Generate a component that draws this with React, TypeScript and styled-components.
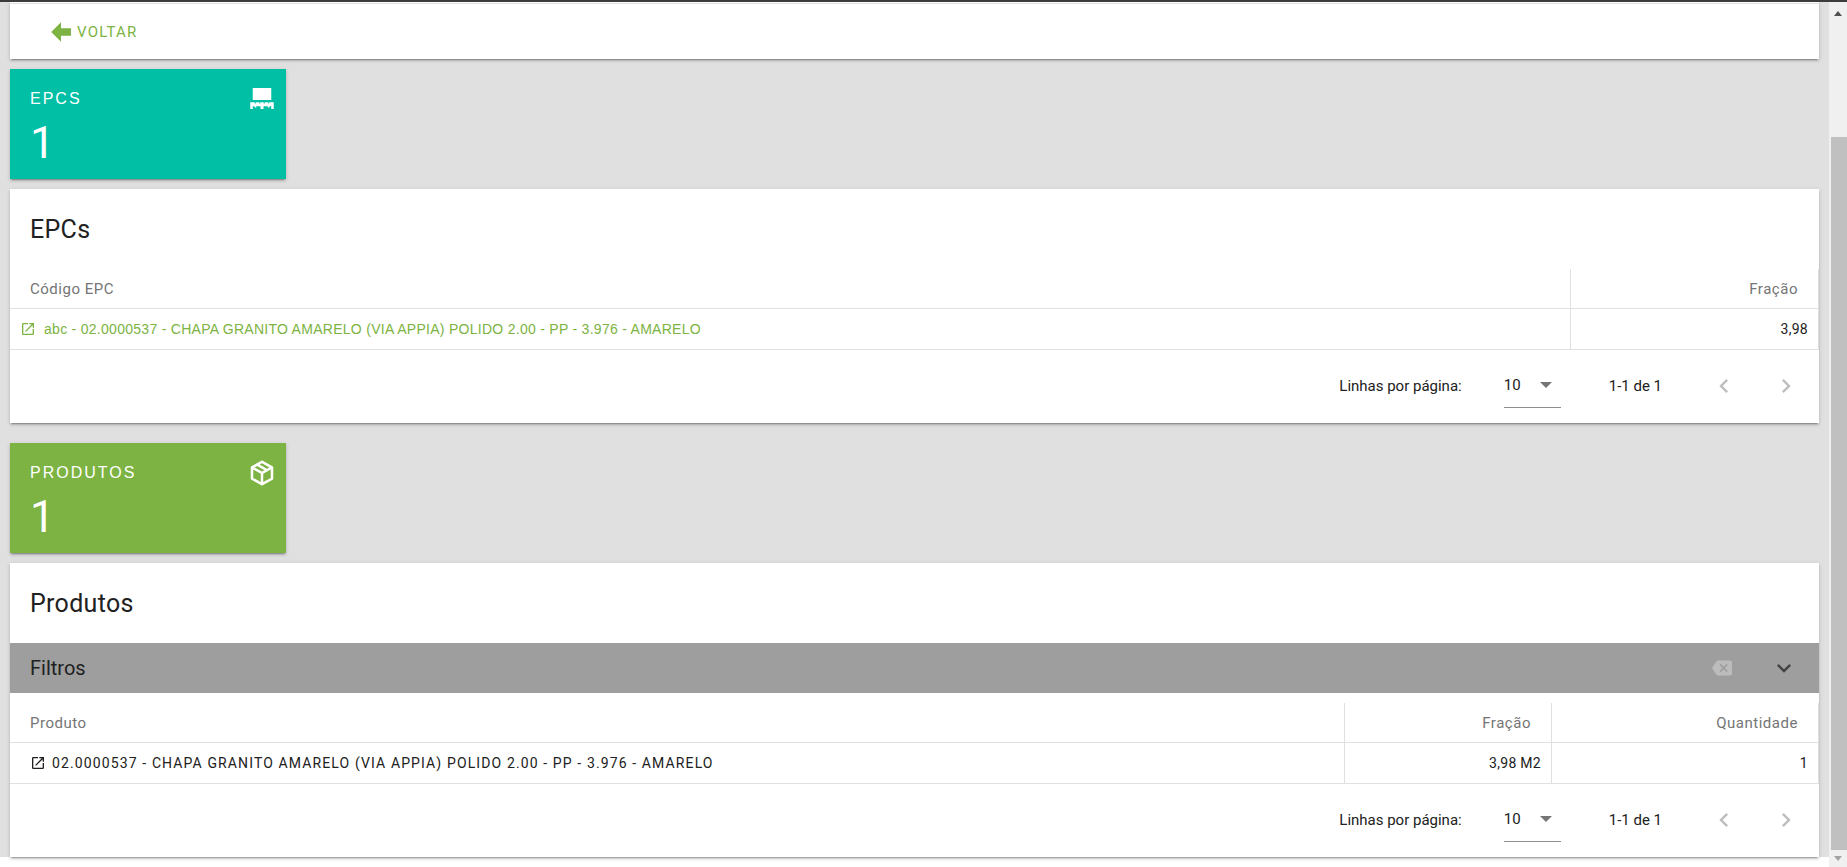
import React from "react";
import styled, { createGlobalStyle } from "styled-components";

const GlobalStyle = createGlobalStyle`
  * { box-sizing: border-box; }
  html, body { margin: 0; background: #fff; overflow: hidden; }
  body { font-family: Roboto, "Liberation Sans", sans-serif; font-size: 14px; color: #212121; }
  button, select { font: inherit; color: inherit; border: 0; background: none; padding: 0; margin: 0; }
`;

const Window = styled.div`
  display: flex;
  height: 100vh;
  overflow: hidden;
  border-top: 2px solid #3c3c3c;
`;

const Viewport = styled.div`
  flex: 1;
  min-width: 0;
  overflow: hidden;
`;

const Page = styled.main`
  background: #e0e0e0;
  padding: 0 10px;
`;

const shadow = "0 3px 1px -2px rgba(0,0,0,.2), 0 2px 2px 0 rgba(0,0,0,.14), 0 1px 5px 0 rgba(0,0,0,.12)";

const Card = styled.section`
  background: #fff;
  box-shadow: ${shadow};
`;

const ToolbarCard = styled(Card)`
  padding-top: 1px;
`;

const ToolbarInner = styled.div`
  display: flex;
  align-items: center;
  height: 56px;
  padding-left: 36px;
  border-top: 1px solid #e0e0e0;
`;

const BackButton = styled.button`
  display: flex;
  align-items: center;
  gap: 1px;
  color: #7cb342;
  font-size: 15px;
  line-height: 20px;
  letter-spacing: 0.08em;
  cursor: pointer;
`;

const Stat = styled.section<{ $color: string; $top: number }>`
  display: flex;
  justify-content: space-between;
  width: 276px;
  max-width: 100%;
  height: 110px;
  margin: ${(p) => p.$top}px 0 10px;
  padding: 15px 9px 0 20px;
  background: ${(p) => p.$color};
  box-shadow: ${shadow};
  color: #fff;
`;

const StatLabel = styled.h2`
  margin: 0;
  font-family: "Liberation Sans", Arial, sans-serif;
  font-size: 16px;
  font-weight: 400;
  line-height: 30px;
  letter-spacing: 2px;
`;

const StatValue = styled.p`
  margin: 5px 0 0;
  font-size: 44px;
  line-height: 48px;
`;

const Title = styled.h1`
  margin: 0;
  padding: 2px 20px 0;
  font-size: 25px;
  font-weight: 400;
  line-height: 78px;
  letter-spacing: 0.0125em;
`;

const Filter = styled.div`
  display: flex;
  align-items: center;
  height: 50px;
  margin-bottom: 10px;
  padding: 0 21px 0 20px;
  background: #9e9e9e;
`;

const FilterTitle = styled.h2`
  flex: 1;
  margin: 0;
  font-size: 20px;
  font-weight: 400;
`;

const IconButton = styled.button<{ $gap?: number; $color?: string }>`
  display: flex;
  margin-left: ${(p) => p.$gap ?? 0}px;
  color: ${(p) => p.$color ?? "#bdbdbd"};
  cursor: pointer;
`;

const Table = styled.table`
  width: 100%;
  table-layout: fixed;
  border-collapse: separate;
  border-spacing: 0;
`;

const Th = styled.th<{ $w?: number; $right?: boolean }>`
  width: ${(p) => (p.$w ? `${p.$w}px` : "auto")};
  height: 40px;
  padding: 0 20px;
  border: solid #e0e0e0;
  border-width: 0 1px 1px 0;
  color: #757575;
  font-size: 15px;
  font-weight: 400;
  letter-spacing: 0.035em;
  text-align: ${(p) => (p.$right ? "right" : "left")};
`;

const Td = styled.td<{ $right?: boolean }>`
  height: 41px;
  padding: 0 10px;
  border: solid #e0e0e0;
  border-width: 0 1px 1px 0;
  letter-spacing: 0.02em;
  text-align: ${(p) => (p.$right ? "right" : "left")};
`;

const EpcLink = styled.a`
  display: flex;
  align-items: center;
  gap: 8px;
  color: #7cb342;
  font-family: "Liberation Sans", Arial, sans-serif;
  text-decoration: none;
`;

const ProductLink = styled(EpcLink)`
  gap: 6px;
  padding-left: 10px;
  color: #212121;
  font-family: Roboto, sans-serif;
  letter-spacing: 0.08em;
`;

const Footer = styled.div`
  display: flex;
  align-items: center;
  justify-content: flex-end;
  height: 73px;
  padding: 0 19px 2px 0;
  font-size: 15px;
`;

const RowsLabel = styled.label`
  display: flex;
  align-items: center;
`;

const SelectBox = styled.span`
  display: flex;
  align-items: center;
  width: 57px;
  height: 45px;
  margin: 0 48px 0 42px;
  border-bottom: 1px solid #8e8e8e;
  & > select { appearance: none; width: 35px; outline: 0; }
`;

const Range = styled.span`
  margin-right: 48px;
`;

const Scrollbar = styled.div`
  display: flex;
  flex-direction: column;
  align-items: center;
  width: 18px;
  background: #f0f0f0;
`;

const ScrollArrow = styled.div<{ $height: number }>`
  display: flex;
  align-items: center;
  justify-content: center;
  height: ${(p) => p.$height}px;
`;

const Track = styled.div`
  flex: 1;
  align-self: stretch;
  display: flex;
  padding: 112px 0 0 2px;
`;

const Thumb = styled.div`
  flex: 1;
  background: #c0c0c0;
`;

function Icon({ d, size = 28 }: { d: string; size?: number }) {
  return (
    <svg width={size} height={size} viewBox="0 0 24 24" fill="currentColor" aria-hidden="true">
      <path d={d} fillRule="evenodd" />
    </svg>
  );
}

const icons = {
  back: "M20 9V15H12V19.84L4.16 12L12 4.16V9H20Z",
  pallet: "M4.600 3.200H19.400V12.800H4.600ZM2.600 14.600H21.400V20H19.400V17.800H18V18.800H16.600V17.800H13.200V20H10.800V17.800H7.400V18.800H6V17.800H4.600V20H2.600ZM6.200 14.600V15.600H7V14.600ZM9.800 14.600V15.600H10.600V14.600ZM13.400 14.600V15.600H14.200V14.600ZM17 14.600V15.600H17.800V14.600Z",
  box: "M21,16.5C21,16.88 20.79,17.21 20.47,17.38L12.57,21.82C12.41,21.94 12.21,22 12,22C11.79,22 11.59,21.94 11.43,21.82L3.53,17.38C3.21,17.21 3,16.88 3,16.5V7.5C3,7.12 3.21,6.79 3.53,6.62L11.43,2.18C11.59,2.06 11.79,2 12,2C12.21,2 12.41,2.06 12.57,2.18L20.47,6.62C20.79,6.79 21,7.12 21,7.5V16.5M12,4.15L10.11,5.22L16,8.61L17.96,7.5L12,4.15M6.04,7.5L12,10.85L13.96,9.75L8.08,6.35L6.04,7.5M5,15.91L11,19.29V12.58L5,9.21V15.91M19,15.91V9.21L13,12.58V19.29L19,15.91Z",
  open: "M14,3V5H17.59L7.76,14.83L9.17,16.24L19,6.41V10H21V3M19,19H5V5H12V3H5C3.89,3 3,3.9 3,5V19A2,2 0 0,0 5,21H19A2,2 0 0,0 21,19V12H19V19Z",
  left: "M15.41 7.41L14 6L8 12L14 18L15.41 16.59L10.83 12Z",
  right: "M8.59 16.59L13.17 12L8.59 7.41L10 6L16 12L10 18Z",
  down: "M7.41 8.59L12 13.17L16.59 8.59L18 10L12 16L6 10Z",
  clear: "M22 3H7C6.31 3 5.77 3.35 5.41 3.88L0 12L5.41 20.11C5.77 20.64 6.31 21 7 21H22C23.1 21 24 20.1 24 19V5C24 3.9 23.1 3 22 3M19 15.59L17.59 17L14 13.41L10.41 17L9 15.59L12.59 12L9 8.41L10.41 7L14 10.59L17.59 7L19 8.41L15.41 12Z",
};

function Pagination() {
  return (
    <Footer>
      <RowsLabel>
        Linhas por página:
        <SelectBox>
          <select defaultValue="10"><option>10</option></select>
          <svg width="14" height="6" viewBox="0 0 14 6" aria-hidden="true">
            <path d="M1 0H13L7 6Z" fill="#757575" />
          </svg>
        </SelectBox>
      </RowsLabel>
      <Range>1-1 de 1</Range>
      <IconButton aria-label="Página anterior"><Icon d={icons.left} /></IconButton>
      <IconButton $gap={34} aria-label="Próxima página"><Icon d={icons.right} /></IconButton>
    </Footer>
  );
}

function StatCard(p: { label: string; value: number; color: string; icon: string; top: number }) {
  return (
    <Stat $color={p.color} $top={p.top}>
      <div>
        <StatLabel>{p.label}</StatLabel>
        <StatValue>{p.value}</StatValue>
      </div>
      <Icon d={p.icon} size={30} />
    </Stat>
  );
}

export default function App() {
  return (
    <Window>
      <GlobalStyle />
      <Viewport>
        <Page>
          <ToolbarCard>
            <ToolbarInner>
              <BackButton><Icon d={icons.back} size={30} />VOLTAR</BackButton>
            </ToolbarInner>
          </ToolbarCard>

          <StatCard label="EPCS" value={1} color="#00bfa5" icon={icons.pallet} top={10} />
          <Card>
            <Title>EPCs</Title>
            <Table>
              <thead>
                <tr><Th>Código EPC</Th><Th $right $w={248}>Fração</Th></tr>
              </thead>
              <tbody>
                <tr>
                  <Td>
                    <EpcLink href="#epc">
                      <Icon d={icons.open} size={16} />
                      abc - 02.0000537 - CHAPA GRANITO AMARELO (VIA APPIA) POLIDO 2.00 - PP - 3.976 - AMARELO
                    </EpcLink>
                  </Td>
                  <Td $right>3,98</Td>
                </tr>
              </tbody>
            </Table>
            <Pagination />
          </Card>

          <StatCard label="PRODUTOS" value={1} color="#7cb342" icon={icons.box} top={20} />
          <Card>
            <Title>Produtos</Title>
            <Filter>
              <FilterTitle>Filtros</FilterTitle>
              <IconButton $color="#bcbcbc" aria-label="Limpar filtros"><Icon d={icons.clear} size={20} /></IconButton>
              <IconButton $gap={38} $color="#424242" aria-label="Expandir filtros"><Icon d={icons.down} /></IconButton>
            </Filter>
            <Table>
              <thead>
                <tr><Th>Produto</Th><Th $right $w={207}>Fração</Th><Th $right $w={267}>Quantidade</Th></tr>
              </thead>
              <tbody>
                <tr>
                  <Td>
                    <ProductLink href="#produto">
                      <Icon d={icons.open} size={16} />
                      02.0000537 - CHAPA GRANITO AMARELO (VIA APPIA) POLIDO 2.00 - PP - 3.976 - AMARELO
                    </ProductLink>
                  </Td>
                  <Td $right>3,98 M2</Td>
                  <Td $right>1</Td>
                </tr>
              </tbody>
            </Table>
            <Pagination />
          </Card>
        </Page>
      </Viewport>
      <Scrollbar aria-hidden="true">
        <ScrollArrow $height={23}><svg width="8" height="5"><path d="M0 5H8L4 0Z" fill="#505050" /></svg></ScrollArrow>
        <Track><Thumb /></Track>
        <ScrollArrow $height={17}><svg width="8" height="5"><path d="M0 0H8L4 5Z" fill="#a3a3a3" /></svg></ScrollArrow>
      </Scrollbar>
    </Window>
  );
}
